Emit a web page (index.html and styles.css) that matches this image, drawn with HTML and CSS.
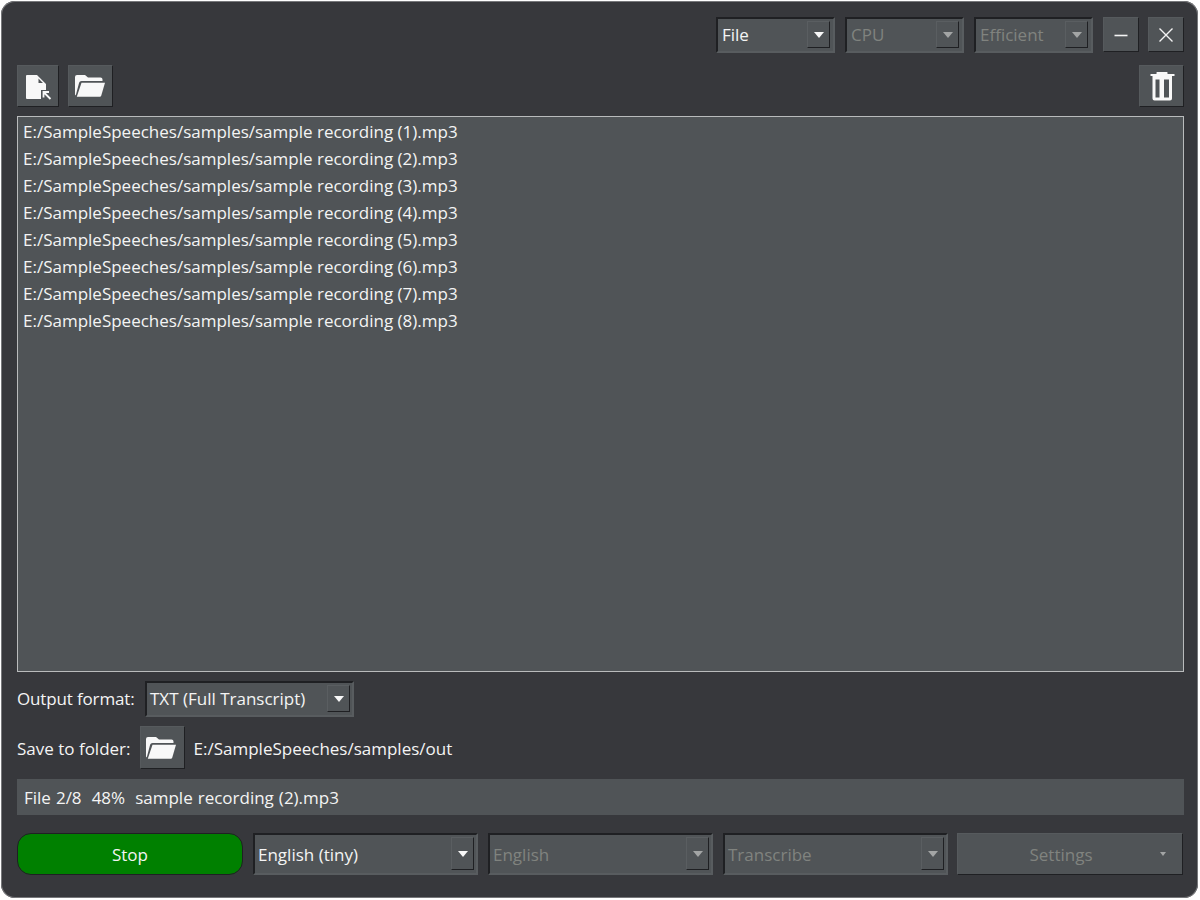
FILE: index.html
```html
<!DOCTYPE html>
<html lang="en">
  <head>
    <meta charset="UTF-8" />
    <title>Transcriber</title>
    <link rel="stylesheet" href="styles.css">
  </head>
  <body>
    <div class="window">
      <div class="title-row">
        <div class="combo small"><span class="combo-text">File</span><span class="arrow"><i></i></span></div>
        <div class="combo small disabled"><span class="combo-text">CPU</span><span class="arrow"><i></i></span></div>
        <div class="combo small disabled"><span class="combo-text">Efficient</span><span class="arrow"><i></i></span></div>
        <button class="btn win-btn">
          <svg width="14" height="14" viewBox="0 0 14 14"><path d="M0.500 7.500h13" stroke="#f4f4f4" stroke-width="1.600"/></svg>
        </button>
        <button class="btn win-btn close-btn">
          <svg width="16" height="16" viewBox="0 0 16 16"><path d="M1.500 1.500l13 13M14.500 1.500l-13 13" stroke="#f4f4f4" stroke-width="1.400" fill="none"/></svg>
        </button>
      </div>

      <div class="tool-row">
        <button class="btn tool-file">
          <svg width="28" height="30" viewBox="0 0 28 30">
            <path fill-rule="evenodd" fill="#f8f8f8" d="M3 4h10l9 9v6h-5v9H3a1 1 0 0 1-1-1V5a1 1 0 0 1 1-1zM14.500 7.500v4.500H19z"/>
            <path d="M19.500 26.500V21h5.500M20 21.500l6.500 6.500" stroke="#f8f8f8" stroke-width="1.800" fill="none"/>
          </svg>
        </button>
        <button class="btn tool-folder">
          <svg width="32" height="26" viewBox="0 0 32 26"><use href="#folder-icon" x="-1"/></svg>
        </button>
        <button class="btn tool-trash">
          <svg width="26" height="32" viewBox="0 0 26 32">
            <path fill="#f8f8f8" d="M8 2h10a.5.5 0 0 1 .5.5v1.500h7V6H1.500V4h6V2.500A.5.5 0 0 1 8 2z"/>
            <path fill="#f8f8f8" fill-rule="evenodd" d="M3.500 6H23v22.500a2 2 0 0 1-2 2H5.500a2 2 0 0 1-2-2zM6.500 9.500v18h4v-18zM15 9.500v18h5v-18z"/>
          </svg>
        </button>
      </div>

      <ul class="file-list">
        <li>E:/SampleSpeeches/samples/sample recording (1).mp3</li>
        <li>E:/SampleSpeeches/samples/sample recording (2).mp3</li>
        <li>E:/SampleSpeeches/samples/sample recording (3).mp3</li>
        <li>E:/SampleSpeeches/samples/sample recording (4).mp3</li>
        <li>E:/SampleSpeeches/samples/sample recording (5).mp3</li>
        <li>E:/SampleSpeeches/samples/sample recording (6).mp3</li>
        <li>E:/SampleSpeeches/samples/sample recording (7).mp3</li>
        <li>E:/SampleSpeeches/samples/sample recording (8).mp3</li>
      </ul>

      <div class="format-row">
        <label>Output format:</label>
        <div class="combo format"><span class="combo-text">TXT (Full Transcript)</span><span class="arrow"><i></i></span></div>
      </div>

      <div class="folder-row">
        <label>Save to folder:</label>
        <button class="btn save-btn">
          <svg width="32" height="26" viewBox="0 0 32 26"><use href="#folder-icon" x="-1"/></svg>
        </button>
        <span class="path">E:/SampleSpeeches/samples/out</span>
      </div>

      <div class="status">File 2/8&nbsp; 48%&nbsp; sample recording (2).mp3</div>

      <div class="bottom-row">
        <button class="stop">Stop</button>
        <div class="combo wide"><span class="combo-text">English (tiny)</span><span class="arrow"><i></i></span></div>
        <div class="combo wide disabled"><span class="combo-text">English</span><span class="arrow"><i></i></span></div>
        <div class="combo wide disabled"><span class="combo-text">Transcribe</span><span class="arrow"><i></i></span></div>
        <button class="btn settings">Settings<i class="menu-arrow"></i></button>
      </div>
    </div>

    <svg class="defs" width="0" height="0">
      <symbol id="folder-icon" viewBox="0 0 32 26" width="32" height="26">
        <path d="M1 22.500V4a2 2 0 0 1 2-2h8l3 2.500h12.500a2 2 0 0 1 2 2V8H7.500a2.500 2.500 0 0 0-2.400 1.800L2 21.500z" fill="#f8f8f8"/>
        <path d="M7.500 9.700H31l-3.800 13a1.500 1.500 0 0 1-1.400 1H2.800z" fill="#f8f8f8"/>
      </symbol>
    </svg>
  </body>
</html>
```

FILE: styles.css
```css
html,
body {
  margin: 0;
  height: 100%;
  background: #ffffff;
  overflow: hidden;
}

body {
  font-family: "Open Sans", "Noto Sans", sans-serif;
  font-size: 17px;
  color: #f4f4f4;
}

.defs {
  position: fixed;
  width: 0;
  height: 0;
}

.window {
  box-sizing: border-box;
  width: 1197px;
  height: 897px;
  margin: 1px 0 0 1px;
  padding: 16px 14px 22px 16px;
  background: #37383c;
  border-radius: 14px;
  box-shadow: inset 0 0 0 1px #77787b;
  display: flex;
  flex-direction: column;
}

.title-row {
  display: flex;
  justify-content: flex-end;
  gap: 10px;
  height: 36px;
}

.tool-row {
  display: flex;
  gap: 9px;
  margin-top: 12px;
  height: 42px;
}

.file-list {
  list-style: none;
  margin: 9px 0 0;
  padding: 1px 5px;
  height: 552px;
  background: #505457;
  border: 1px solid #b9bbbc;
}

.file-list li {
  height: 27px;
  line-height: 27px;
  white-space: nowrap;
}

.format-row {
  display: flex;
  align-items: center;
  gap: 9px;
  margin-top: 9px;
  height: 36px;
}

.format-row label {
  width: 119px;
  padding-bottom: 2px;
  white-space: nowrap;
  letter-spacing: -0.15px;
}

.folder-row {
  display: flex;
  align-items: center;
  gap: 9px;
  margin-top: 9px;
  height: 43px;
}

.folder-row label,
.path {
  padding-top: 2px;
}

.status {
  margin-top: 10px;
  height: 36px;
  line-height: 38px;
  padding: 0 7px;
  word-spacing: 0.6px;
  background: #505457;
}

.bottom-row {
  display: flex;
  gap: 10px;
  margin-top: 18px;
  height: 42px;
}

.btn {
  box-sizing: border-box;
  display: flex;
  align-items: center;
  justify-content: center;
  padding: 0;
  font: inherit;
  color: inherit;
  background: #505457;
  border: 1px solid;
  border-color: #565a5d #1f2023 #1f2023 #565a5d;
}

.win-btn {
  width: 36px;
  height: 35px;
}

.close-btn {
  margin-left: -1px;
}

.tool-file {
  width: 42px;
  height: 42px;
}

.tool-folder {
  width: 45px;
  height: 42px;
}

.tool-trash {
  width: 45px;
  height: 42px;
  margin-left: auto;
}

.save-btn {
  width: 45px;
  height: 43px;
}

.combo {
  box-sizing: border-box;
  display: flex;
  align-items: center;
  justify-content: space-between;
  padding: 2px 2px 3px 3px;
  background: #505457;
  border: 2px solid;
  border-color: #1f2023 #585c5f #585c5f #1f2023;
}

.combo.small {
  width: 119px;
  height: 36px;
  padding-left: 4px;
  padding-right: 3px;
}

.combo.format {
  width: 209px;
  height: 36px;
}

.combo.wide {
  width: 225px;
  height: 42px;
}

.combo.wide .combo-text {
  padding-top: 2px;
}

.combo.disabled .combo-text {
  color: #80837f;
}

.combo-text {
  white-space: nowrap;
}

.arrow {
  box-sizing: border-box;
  flex: none;
  display: flex;
  align-items: center;
  justify-content: center;
  width: 23px;
  height: 100%;
  border: 1px solid;
  border-color: #5a5e61 #1f2023 #1f2023 #5a5e61;
}

.arrow i {
  width: 0;
  height: 0;
  border-left: 5px solid transparent;
  border-right: 5px solid transparent;
  border-top: 6px solid #f8f8f8;
}

.disabled .arrow i {
  border-top-color: #a3a5a5;
}

.stop {
  box-sizing: border-box;
  width: 226px;
  height: 42px;
  padding: 0;
  font: inherit;
  color: #f4f4f4;
  background: #008000;
  border: 1px solid #1f2023;
  border-radius: 14px;
}

.settings {
  position: relative;
  width: 226px;
  height: 42px;
  margin-left: -1px;
  padding-right: 18px;
  color: #80837f;
}

.menu-arrow {
  position: absolute;
  right: 16px;
  top: 18px;
  width: 0;
  height: 0;
  border-left: 3.5px solid transparent;
  border-right: 3.5px solid transparent;
  border-top: 4px solid #a3a5a5;
}
```
